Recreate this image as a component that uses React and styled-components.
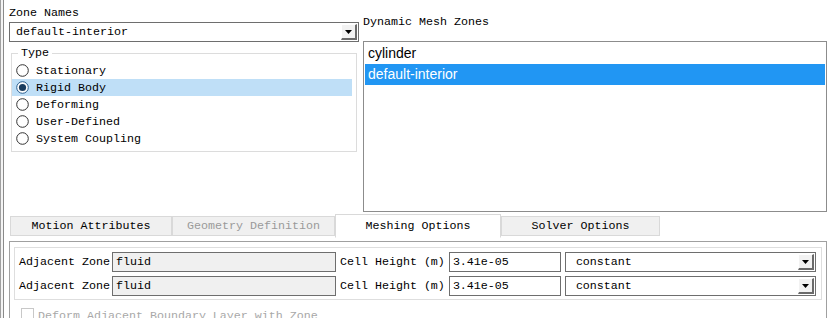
import React from 'react'
import { styled, createGlobalStyle } from 'styled-components'

const GlobalStyle = createGlobalStyle`
  body {
    margin: 0;
    background: #fff;
    font-family: "Liberation Mono", monospace;
    font-size: 11.67px;
    color: #000;
  }
  * { box-sizing: border-box; }
`

const Frame = styled.div`
  display: flex;
  height: 318px;
  overflow: hidden;
`

const Edge = styled.div`
  width: 4px;
  flex-shrink: 0;
  border-left: 1px solid #a0a0a0;
  border-right: 1px solid #8a8a8a;
  background: #f4f4f4;
`

const Main = styled.div`
  margin-left: 5px;
  width: 818px;
  display: flex;
  flex-direction: column;
`

const Top = styled.div`
  display: flex;
  gap: 4px;
`

const LeftCol = styled.div`
  width: 350px;
  display: flex;
  flex-direction: column;
`

const RightCol = styled.div`
  width: 464px;
  display: flex;
  flex-direction: column;
`

const Label = styled.div`
  padding-top: ${p => p.$top}px;
  padding-bottom: ${p => p.$bottom || 0}px;
  line-height: 18px;
  white-space: nowrap;
`

const Combo = styled.div`
  display: flex;
  align-items: center;
  height: 20px;
  width: ${p => p.$w ? `${p.$w}px` : 'auto'};
  border: 1px solid #6e6e6e;
  background: #fff;
  padding-left: ${p => p.$pad}px;
  white-space: nowrap;
`

const ArrowBtn = styled.span`
  margin-left: auto;
  margin-right: 1px;
  width: 16px;
  height: 16px;
  display: flex;
  align-items: center;
  justify-content: center;
  background: #f2f2f2;
  border-top: 1px solid #fff;
  border-left: 1px solid #fff;
  border-right: 2px solid #6a6a6a;
  border-bottom: 2px solid #6a6a6a;
`

const Group = styled.fieldset`
  margin: 4px 2px 0;
  padding: 2px 4px 4px 0;
  border: 1px solid #dcdcdc;
  min-width: 0;
`

const Legend = styled.legend`
  margin-left: 6px;
  padding: 0 3px;
  line-height: 14px;
`

const RadioRow = styled.div`
  display: flex;
  align-items: center;
  gap: 7px;
  height: 17px;
  padding-left: 4px;
  background: ${p => (p.$active ? '#bfdff7' : 'transparent')};
  white-space: nowrap;
`

const List = styled.div`
  height: 171px;
  border: 1px solid #8c8c8c;
  padding: 1px;
  font-family: "Liberation Sans", Arial, sans-serif;
  font-size: 14px;
`

const ListItem = styled.div`
  height: 21px;
  line-height: 21px;
  padding-left: 3px;
  background: ${p => (p.$sel ? '#2196f3' : 'transparent')};
  color: ${p => (p.$sel ? '#fff' : '#000')};
`

const TabStrip = styled.div`
  display: flex;
  align-items: flex-end;
  margin: 2px 0 0 1px;
  height: 24px;
`

const Tab = styled.div`
  width: ${p => p.$w}px;
  height: ${p => (p.$sel ? 24 : 20)}px;
  margin-bottom: ${p => (p.$sel ? 0 : 2)}px;
  display: flex;
  align-items: center;
  justify-content: center;
  background: ${p => (p.$sel ? '#fff' : '#f0f0f0')};
  border: 1px solid #d9d9d9;
  border-bottom-color: ${p => (p.$sel ? '#fff' : '#d9d9d9')};
  color: ${p => (p.$off ? '#9a9a9a' : '#000')};
  white-space: nowrap;
`

const Panel = styled.div`
  margin-top: 3px;
  border: 1px solid #a0a0a0;
  border-bottom: none;
  padding: 5px 4px 0;
  flex: 1;
`

const Inner = styled.div`
  border: 1px solid #dedede;
  padding: 4px 4px 3px;
  display: flex;
  flex-direction: column;
  gap: 4px;
`

const Row = styled.div`
  display: flex;
  align-items: center;
  height: 20px;
  white-space: nowrap;
`

const Field = styled.div`
  width: ${p => p.$w}px;
  height: 20px;
  margin-left: ${p => p.$ml}px;
  line-height: 18px;
  padding-left: 3px;
  border: 1px solid #6e6e6e;
  background: ${p => (p.$ro ? '#f0f0f0' : '#fff')};
`

const RowLabel = styled.span`
  margin-left: ${p => p.$ml || 0}px;
`

const CheckRow = styled.div`
  display: flex;
  align-items: flex-start;
  gap: 4px;
  margin-top: 8px;
  padding-left: 7px;
  color: #a8a8a8;
  white-space: nowrap;
`

const CheckBox = styled.span`
  width: 13px;
  height: 13px;
  border: 1px solid #c8c8c8;
  background: #fff;
  flex-shrink: 0;
`

const CheckText = styled.span`
  line-height: 16px;
`

const Arrow = () => (
  <svg width="7" height="4" viewBox="0 0 7 4">
    <path d="M0 0h7L3.5 4z" fill="#000" />
  </svg>
)

const Radio = ({ on }) => (
  <svg width="13" height="13" viewBox="0 0 13 13">
    <circle cx="6.5" cy="6.5" r="5.8" fill="#fff" stroke={on ? '#2b5f8f' : '#333'} strokeWidth="1" />
    {on && <circle cx="6.5" cy="6.5" r="3.6" fill="#1b3d5f" />}
  </svg>
)

const TYPES = ['Stationary', 'Rigid Body', 'Deforming', 'User-Defined', 'System Coupling']

const TABS = [
  { name: 'Motion Attributes', w: 162 },
  { name: 'Geometry Definition', w: 163, off: true },
  { name: 'Meshing Options', w: 166, sel: true },
  { name: 'Solver Options', w: 159 },
]

const App = () => (
  <>
    <GlobalStyle />
    <Frame>
      <Edge />
      <Main>
        <Top>
          <LeftCol>
            <Label $top={4}>Zone Names</Label>
            <Combo $pad={6}>
              default-interior
              <ArrowBtn><Arrow /></ArrowBtn>
            </Combo>
            <Group>
              <Legend>Type</Legend>
              {TYPES.map(t => (
                <RadioRow key={t} $active={t === 'Rigid Body'}>
                  <Radio on={t === 'Rigid Body'} />
                  {t}
                </RadioRow>
              ))}
            </Group>
          </LeftCol>
          <RightCol>
            <Label $top={13} $bottom={10}>Dynamic Mesh Zones</Label>
            <List>
              <ListItem>cylinder</ListItem>
              <ListItem $sel>default-interior</ListItem>
            </List>
          </RightCol>
        </Top>
        <TabStrip>
          {TABS.map(t => (
            <Tab key={t.name} $w={t.w} $sel={t.sel} $off={t.off}>{t.name}</Tab>
          ))}
        </TabStrip>
        <Panel>
          <Inner>
            {[0, 1].map(i => (
              <Row key={i}>
                <RowLabel>Adjacent Zone</RowLabel>
                <Field $w={224} $ml={2} $ro>fluid</Field>
                <RowLabel $ml={4}>Cell Height (m)</RowLabel>
                <Field $w={112} $ml={4}>3.41e-05</Field>
                <Combo $w={251} $pad={10} style={{ marginLeft: 4 }}>
                  constant
                  <ArrowBtn><Arrow /></ArrowBtn>
                </Combo>
              </Row>
            ))}
          </Inner>
          <CheckRow>
            <CheckBox />
            <CheckText>Deform Adjacent Boundary Layer with Zone</CheckText>
          </CheckRow>
        </Panel>
      </Main>
    </Frame>
  </>
)

export default App
